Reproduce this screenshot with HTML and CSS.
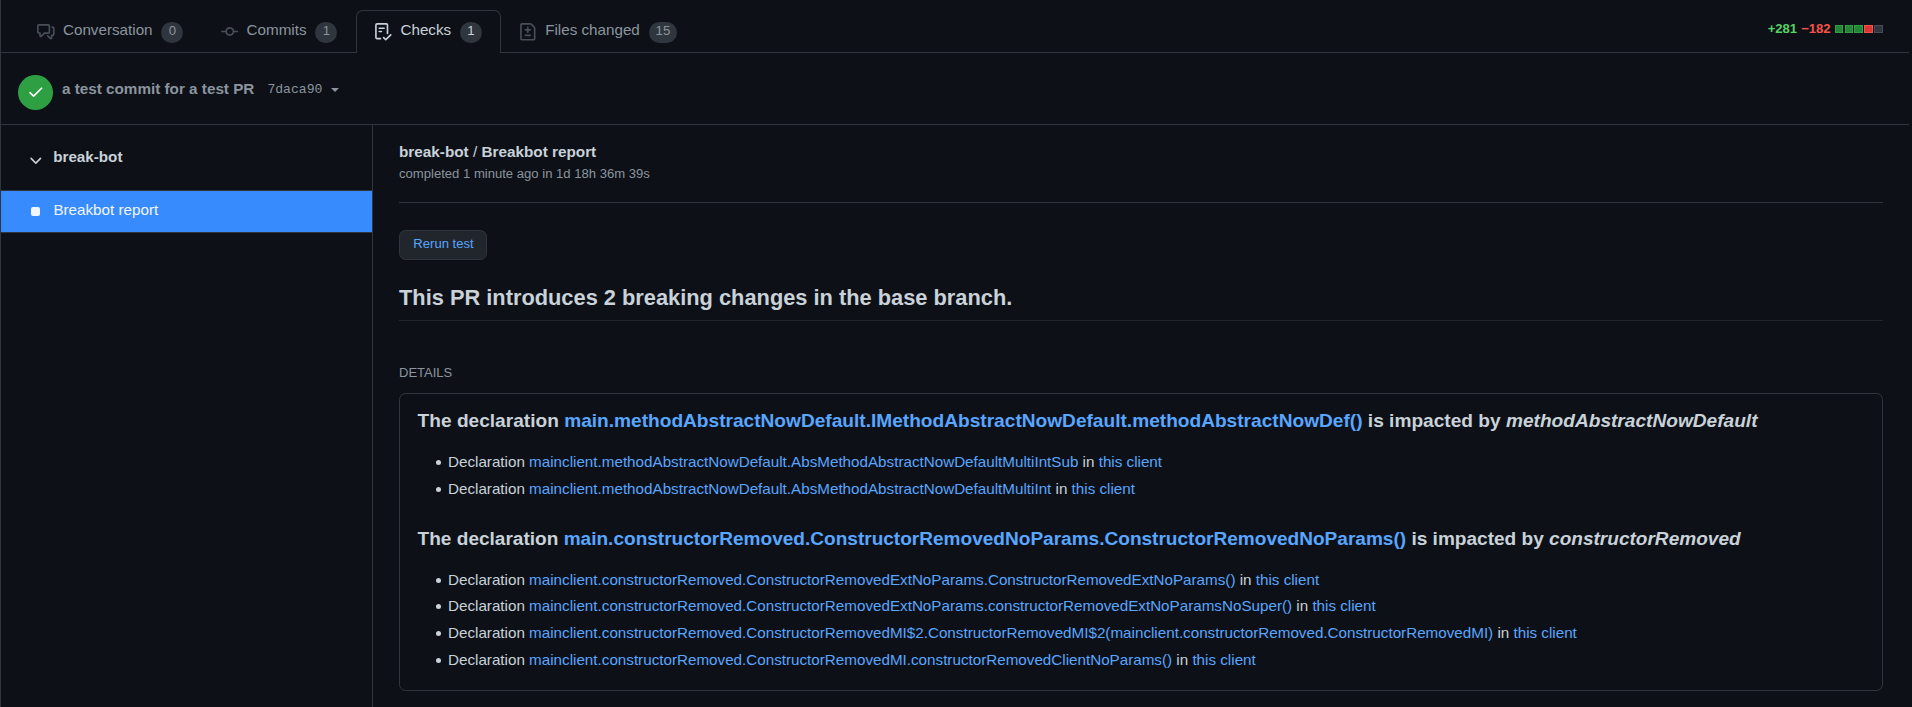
FILE: index.html
```
<!DOCTYPE html>
<html lang="en">
<head>
<meta charset="utf-8">
<title>Checks</title>
<link rel="stylesheet" href="styles.css">
</head>
<body>
<div class="page">
  <nav class="tabs">
    <a class="tab"><svg class="icon" viewBox="0 0 16 16"><path d="M1.5 2.75a.25.25 0 01.25-.25h8.5a.25.25 0 01.25.25v5.5a.25.25 0 01-.25.25h-3.5a.75.75 0 00-.53.22L3.5 11.44V9.25a.75.75 0 00-.75-.75h-1a.25.25 0 01-.25-.25v-5.5zM1.75 1A1.75 1.75 0 000 2.75v5.5C0 9.216.784 10 1.75 10H2v1.543a1.457 1.457 0 002.487 1.03L7.061 10h3.189A1.75 1.75 0 0012 8.25v-5.5A1.75 1.75 0 0010.25 1h-8.5zM14.5 4.75a.25.25 0 00-.25-.25h-.5a.75.75 0 110-1.5h.5c.966 0 1.75.784 1.75 1.75v5.5A1.75 1.75 0 0114.25 12H14v1.543a1.457 1.457 0 01-2.487 1.03L9.22 12.28a.75.75 0 111.06-1.06l2.22 2.22v-2.19a.75.75 0 01.75-.75h1a.25.25 0 00.25-.25v-5.5z"/></svg><span class="label">Conversation</span><span class="counter">0</span></a>
    <a class="tab"><svg class="icon" viewBox="0 0 16 16"><path fill-rule="evenodd" d="M10.5 7.75a2.5 2.5 0 11-5 0 2.5 2.5 0 015 0zm1.43.75a4.002 4.002 0 01-7.86 0H.75a.75.75 0 110-1.5h3.32a4.001 4.001 0 017.86 0h3.32a.75.75 0 110 1.5h-3.32z"/></svg><span class="label">Commits</span><span class="counter">1</span></a>
    <a class="tab selected"><svg class="icon" viewBox="0 0 16 16"><path d="M2.5 1.75a.25.25 0 01.25-.25h8.5a.25.25 0 01.25.25v7.736a.75.75 0 101.5 0V1.75A1.75 1.75 0 0011.25 0h-8.5A1.75 1.75 0 001 1.75v11.5c0 .966.784 1.75 1.75 1.75h3.17a.75.75 0 000-1.5H2.75a.25.25 0 01-.25-.25V1.75zM4.75 4a.75.75 0 000 1.5h4.5a.75.75 0 000-1.5h-4.5zM4 7.75A.75.75 0 014.75 7h2a.75.75 0 010 1.5h-2A.75.75 0 014 7.75zm11.774 3.537a.75.75 0 00-1.048-1.074L10.7 14.145 9.281 12.72a.75.75 0 00-1.062 1.058l1.943 1.95a.75.75 0 001.055.008l4.557-4.45z"/></svg><span class="label">Checks</span><span class="counter">1</span></a>
    <a class="tab"><svg class="icon" viewBox="0 0 16 16"><path fill-rule="evenodd" d="M2.75 1.5a.25.25 0 00-.25.25v12.5c0 .138.112.25.25.25h10.5a.25.25 0 00.25-.25V4.664a.25.25 0 00-.073-.177l-2.914-2.914a.25.25 0 00-.177-.073H2.75zM1 1.75C1 .784 1.784 0 2.75 0h7.586c.464 0 .909.184 1.237.513l2.914 2.914c.329.328.513.773.513 1.237v9.586A1.75 1.75 0 0113.25 16H2.75A1.75 1.75 0 011 14.25V1.75zm7 1.5a.75.75 0 01.75.75v1.5h1.5a.75.75 0 010 1.5h-1.5v1.5a.75.75 0 01-1.5 0V7h-1.5a.75.75 0 010-1.5h1.5V4A.75.75 0 018 3.25zm-3 8a.75.75 0 01.75-.75h4.5a.75.75 0 010 1.5h-4.5a.75.75 0 01-.75-.75z"/></svg><span class="label">Files changed</span><span class="counter">15</span></a>
    <div class="diffstat"><span class="added">+281</span><span class="removed">−182</span><span class="blocks"><i class="block add"></i><i class="block add"></i><i class="block add"></i><i class="block del"></i><i class="block"></i></span></div>
  </nav>
  <header class="commit">
    <span class="status"><svg class="icon" viewBox="0 0 16 16"><path d="M13.78 4.22a.75.75 0 010 1.06l-7.25 7.25a.75.75 0 01-1.06 0L2.22 9.28a.75.75 0 011.06-1.06L6 10.94l6.72-6.72a.75.75 0 011.06 0z"/></svg></span>
    <span class="message">a test commit for a test PR</span>
    <span class="sha">7daca90</span>
    <i class="caret"></i>
  </header>
  <div class="body">
    <aside class="sidebar">
      <div class="suite"><svg class="icon" viewBox="0 0 16 16"><path d="M12.78 6.22a.75.75 0 010 1.06l-4.25 4.25a.75.75 0 01-1.06 0L3.22 7.28a.75.75 0 011.06-1.06L8 9.94l3.72-3.72a.75.75 0 011.06 0z"/></svg><span>break-bot</span></div>
      <a class="run"><i class="square"></i><span>Breakbot report</span></a>
    </aside>
    <main class="main">
      <div class="title"><b>break-bot</b> / <b>Breakbot report</b></div>
      <div class="meta">completed 1 minute ago in 1d 18h 36m 39s</div>
      <button class="rerun">Rerun test</button>
      <h2 class="summary">This PR introduces 2 breaking changes in the base branch.</h2>
      <div class="details-label">DETAILS</div>
      <section class="details">
        <h3>The declaration <a>main.methodAbstractNowDefault.IMethodAbstractNowDefault.methodAbstractNowDef()</a> is impacted by <em>methodAbstractNowDefault</em></h3>
        <ul>
          <li>Declaration <a>mainclient.methodAbstractNowDefault.AbsMethodAbstractNowDefaultMultiIntSub</a> in <a>this client</a></li>
          <li>Declaration <a>mainclient.methodAbstractNowDefault.AbsMethodAbstractNowDefaultMultiInt</a> in <a>this client</a></li>
        </ul>
        <h3 class="second">The declaration <a>main.constructorRemoved.ConstructorRemovedNoParams.ConstructorRemovedNoParams()</a> is impacted by <em>constructorRemoved</em></h3>
        <ul>
          <li>Declaration <a>mainclient.constructorRemoved.ConstructorRemovedExtNoParams.ConstructorRemovedExtNoParams()</a> in <a>this client</a></li>
          <li>Declaration <a>mainclient.constructorRemoved.ConstructorRemovedExtNoParams.constructorRemovedExtNoParamsNoSuper()</a> in <a>this client</a></li>
          <li>Declaration <a>mainclient.constructorRemoved.ConstructorRemovedMI$2.ConstructorRemovedMI$2(mainclient.constructorRemoved.ConstructorRemovedMI)</a> in <a>this client</a></li>
          <li>Declaration <a>mainclient.constructorRemoved.ConstructorRemovedMI.constructorRemovedClientNoParams()</a> in <a>this client</a></li>
        </ul>
      </section>
    </main>
  </div>
</div>
</body>
</html>
```
FILE: styles.css
```
* { box-sizing: border-box; }
body {
  margin: 0;
  height: 707px;
  overflow: hidden;
  background: #0d1117;
  color: #c9d1d9;
  font: 15.21px/23px "Liberation Sans", Arial, sans-serif;
}
a { color: #58a6ff; text-decoration: none; }
.page {
  display: flex;
  flex-direction: column;
  width: 1909px;
  height: 707px;
  border-left: 1px solid #30363d;
}
.icon { width: 17.6px; height: 17.6px; flex: none; fill: currentColor; }

.tabs {
  display: flex;
  height: 53px;
  padding: 10px 26px 0 17.4px;
  border-bottom: 1px solid #30363d;
}
.tab {
  display: flex;
  height: 43px;
  padding: 12px 17.6px 0;
  border: 1px solid transparent;
  border-bottom: 0;
  color: #8b949e;
}
.tab .icon { color: #484f58; }
.tab.selected {
  background: #0d1117;
  border-color: #30363d;
  border-radius: 6.6px 6.6px 0 0;
  color: #c9d1d9;
}
.tab.selected .icon { color: #c9d1d9; }
.label { margin: -5px 0 0 8.4px; line-height: 24px; }
.counter {
  height: 21px;
  min-width: 22px;
  margin: -1px 0 0 8.8px;
  padding: 0 7px;
  border-radius: 22px;
  background: #30363d;
  font-size: 13.2px;
  line-height: 17.6px;
  text-align: center;
}
.diffstat {
  display: flex;
  margin-left: auto;
  padding-top: 8px;
  font-size: 13.1px;
  font-weight: bold;
  line-height: 22px;
}
.added { color: #56d364; }
.removed { margin-left: 4px; color: #f85149; }
.blocks { display: flex; gap: 1.1px; margin: 7px 0 0 4px; }
.block { width: 8.8px; height: 8.4px; background: #30363d; border: 1px solid #444c56; }
.block.add { background: #238636; border-color: #2ea043; }
.block.del { background: #da3633; border-color: #f85149; }

.commit {
  display: flex;
  align-items: flex-start;
  height: 72px;
  padding: 22px 0 0 17px;
  border-bottom: 1px solid #30363d;
  color: #8b949e;
}
.status {
  display: flex;
  justify-content: center;
  width: 35px;
  height: 35px;
  padding-top: 8px;
  border-radius: 50%;
  background: #2ea043;
  color: #fff;
}
.message { margin: -8px 0 0 9px; font-size: 15.25px; font-weight: bold; line-height: 44px; }
.sha { margin: -8px 0 0 13px; font: 13.1px/46px "Liberation Mono", monospace; }
.caret { margin: 13px 0 0 8.4px; border: 4.4px solid transparent; border-top-color: currentColor; border-bottom: 0; }

.body { display: flex; flex: 1; min-height: 0; }
.sidebar { width: 372px; border-right: 1px solid #30363d; }
.suite { display: flex; height: 65px; padding: 19px 0 0 26px; font-weight: bold; line-height: 26px; }
.suite .icon { margin: 7px 8.6px 0 0; }
.run {
  display: flex;
  height: 43px;
  padding-left: 30px;
  background: #388bfd;
  border: solid #30363d;
  border-width: 1px 0;
  color: #f0f6fc;
  line-height: 38px;
}
.square { width: 9px; height: 9px; margin: 16px 13.4px 0 0; border-radius: 2px; background: #f0f6fc; }

.main { flex: 1; padding: 15px 26px 0; }
.title { font-size: 15.3px; line-height: 24px; }
.meta {
  height: 39px;
  border-bottom: 1px solid #30363d;
  color: #8b949e;
  font-size: 13.08px;
  line-height: 20px;
}
.rerun {
  display: block;
  width: 88px;
  height: 30px;
  margin: 27px 0 0;
  padding: 0 0 3px 1px;
  border: 1px solid #30363d;
  border-radius: 6.6px;
  background: #21262d;
  color: #58a6ff;
  font: 13.08px/22px "Liberation Sans", Arial, sans-serif;
}
.summary {
  height: 39px;
  margin: 22px 0 0;
  border-bottom: 1px solid #21262d;
  font-size: 21.82px;
  line-height: 31px;
}
.details-label { margin-top: 42px; color: #8b949e; font-size: 13px; line-height: 20px; }
.details {
  height: 298px;
  margin-top: 10px;
  padding: 15px 17.6px 0;
  border: 1px solid #30363d;
  border-radius: 6.6px;
}
.details h3 { margin: 0; font-size: 19.11px; line-height: 24px; }
.details h3.second { font-size: 19.06px; }
.details ul { margin: 16.3px 0 24.1px; padding-left: 30.4px; list-style: none; }
.details li { line-height: 26.6px; }
.details li::before {
  content: "";
  display: inline-block;
  width: 5px;
  height: 5px;
  margin: 0 7px 0 -12px;
  border-radius: 50%;
  background: #c9d1d9;
  vertical-align: 2px;
}
```
